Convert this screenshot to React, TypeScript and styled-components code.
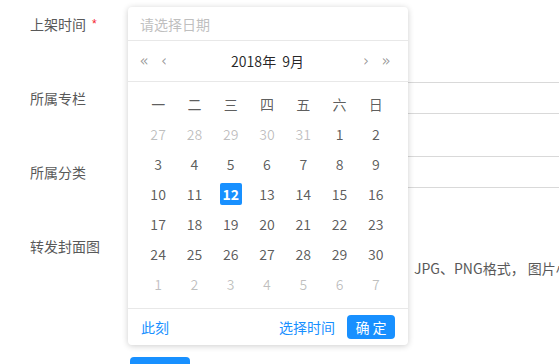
import React from 'react';
import styled, { createGlobalStyle } from 'styled-components';

const GlobalStyle = createGlobalStyle`
  html, body {
    margin: 0;
    padding: 0;
    background: #fff;
  }
  body {
    font-family: "Noto Sans CJK SC", "Noto Sans", sans-serif;
    font-size: 14px;
    color: rgba(0, 0, 0, 0.65);
  }
  * {
    box-sizing: border-box;
  }
`;

const Page = styled.div`
  position: relative;
  width: 559px;
  height: 364px;
  overflow: hidden;
  padding-top: 8px;
`;

const FormRow = styled.div<{ $height?: number }>`
  display: flex;
  align-items: flex-start;
  height: ${(p) => p.$height || 32}px;
  margin-bottom: 42px;
`;

const Label = styled.div`
  width: 130px;
  padding-left: 30px;
  line-height: 32px;
  white-space: nowrap;
  color: #595959;
`;

const Required = styled.span`
  color: #f5222d;
  margin-left: 6px;
  font-size: 12px;
  vertical-align: 2px;
  font-family: "Liberation Sans", sans-serif;
`;

const Field = styled.div`
  flex: 1;
  min-width: 0;
`;

const TextInput = styled.div<{ $width?: number }>`
  height: 32px;
  width: ${(p) => p.$width || 460}px;
  border: 1px solid #d9d9d9;
  border-radius: 4px;
`;

const Hint = styled.div`
  margin-left: 284px;
  margin-top: 28px;
  white-space: nowrap;
  color: #595959;
`;

const SubmitRow = styled.div`
  padding-left: 130px;
  margin-top: -27px;
`;

const SubmitButton = styled.button`
  width: 60px;
  height: 32px;
  border: none;
  border-radius: 4px;
  background: #1890ff;
  color: #fff;
  font-family: inherit;
  font-size: 14px;
  line-height: 32px;
  padding: 0;
`;

/* date picker dropdown, floats over the form */
const Picker = styled.div`
  position: absolute;
  left: 128px;
  top: 7px;
  width: 280px;
  height: 338px;
  background: #fff;
  border-radius: 4px;
  box-shadow: 0 1px 6px rgba(0, 0, 0, 0.2);
  display: flex;
  flex-direction: column;
`;

const PickerInput = styled.div`
  height: 34px;
  padding-left: 12px;
  line-height: 34px;
  color: #bfbfbf;
  border-bottom: 1px solid #e8e8e8;
`;

const PickerHeader = styled.div`
  height: 41px;
  display: flex;
  align-items: center;
  padding: 0 12px 0 6px;
  border-bottom: 1px solid #e8e8e8;
`;

const NavBtn = styled.span`
  width: 20px;
  color: rgba(0, 0, 0, 0.4);
  font-size: 15px;
  font-family: "DejaVu Sans", sans-serif;
  text-align: center;
`;

const Title = styled.div`
  flex: 1;
  text-align: center;
  color: rgba(0, 0, 0, 0.85);
  padding-left: 5px;
`;

const TitlePart = styled.span`
  margin: 0 3px;
`;

const Body = styled.div`
  padding: 7px 14px 9px 12px;
  border-bottom: 1px solid #e8e8e8;
`;

const Grid = styled.div`
  display: grid;
  grid-template-columns: repeat(7, 1fr);
  grid-auto-rows: 30px;
`;

const WeekCell = styled.div`
  display: flex;
  align-items: center;
  justify-content: center;
  color: rgba(0, 0, 0, 0.65);
`;

const DayCell = styled.div`
  display: flex;
  align-items: center;
  justify-content: center;
`;

const Day = styled.span<{ $muted?: boolean; $selected?: boolean }>`
  width: 22px;
  height: 22px;
  line-height: 22px;
  text-align: center;
  border-radius: 2px;
  color: ${(p) => (p.$selected ? '#fff' : p.$muted ? 'rgba(0,0,0,0.25)' : 'rgba(0,0,0,0.65)')};
  background: ${(p) => (p.$selected ? '#1890ff' : 'transparent')};
  font-weight: ${(p) => (p.$selected ? 700 : 400)};
`;

const Footer = styled.div`
  flex: 1;
  display: flex;
  align-items: center;
  padding: 0 13px;
`;

const LinkText = styled.span`
  color: #1890ff;
`;

const FooterRight = styled.div`
  margin-left: auto;
  display: flex;
  align-items: center;
  gap: 12px;
`;

const OkButton = styled.span`
  width: 48px;
  height: 24px;
  line-height: 24px;
  text-align: center;
  border-radius: 4px;
  background: #1890ff;
  color: #fff;
  font-size: 14px;
  letter-spacing: 3px;
  padding-left: 3px;
`;

const weekDays = ['一', '二', '三', '四', '五', '六', '日'];

const buildDays = () => {
  const cells: { n: number; muted: boolean }[] = [];
  [27, 28, 29, 30, 31].forEach((n) => cells.push({ n, muted: true }));
  for (let i = 1; i <= 30; i++) cells.push({ n: i, muted: false });
  for (let i = 1; i <= 7; i++) cells.push({ n: i, muted: true });
  return cells;
};

const DatePanel = () => {
  const days = buildDays();
  return (
    <Picker>
      <PickerInput>请选择日期</PickerInput>
      <PickerHeader>
        <NavBtn>«</NavBtn>
        <NavBtn>‹</NavBtn>
        <Title>
          <TitlePart>2018年</TitlePart>
          <TitlePart>9月</TitlePart>
        </Title>
        <NavBtn>›</NavBtn>
        <NavBtn>»</NavBtn>
      </PickerHeader>
      <Body>
        <Grid>
          {weekDays.map((w) => (
            <WeekCell key={w}>{w}</WeekCell>
          ))}
          {days.map((d, i) => (
            <DayCell key={i}>
              <Day $muted={d.muted} $selected={!d.muted && d.n === 12}>
                {d.n}
              </Day>
            </DayCell>
          ))}
        </Grid>
      </Body>
      <Footer>
        <LinkText>此刻</LinkText>
        <FooterRight>
          <LinkText>选择时间</LinkText>
          <OkButton>确定</OkButton>
        </FooterRight>
      </Footer>
    </Picker>
  );
};

const App = () => (
  <>
    <GlobalStyle />
    <Page>
      <FormRow>
        <Label>
          上架时间<Required>*</Required>
        </Label>
        <Field>
          <TextInput $width={276} />
        </Field>
      </FormRow>
      <FormRow>
        <Label>所属专栏</Label>
        <Field>
          <TextInput />
        </Field>
      </FormRow>
      <FormRow>
        <Label>所属分类</Label>
        <Field>
          <TextInput />
        </Field>
      </FormRow>
      <FormRow $height={112}>
        <Label>转发封面图</Label>
        <Field>
          <Hint>JPG、PNG格式， 图片小于2M</Hint>
        </Field>
      </FormRow>
      <SubmitRow>
        <SubmitButton>保存</SubmitButton>
      </SubmitRow>
      <DatePanel />
    </Page>
  </>
);

export default App;
